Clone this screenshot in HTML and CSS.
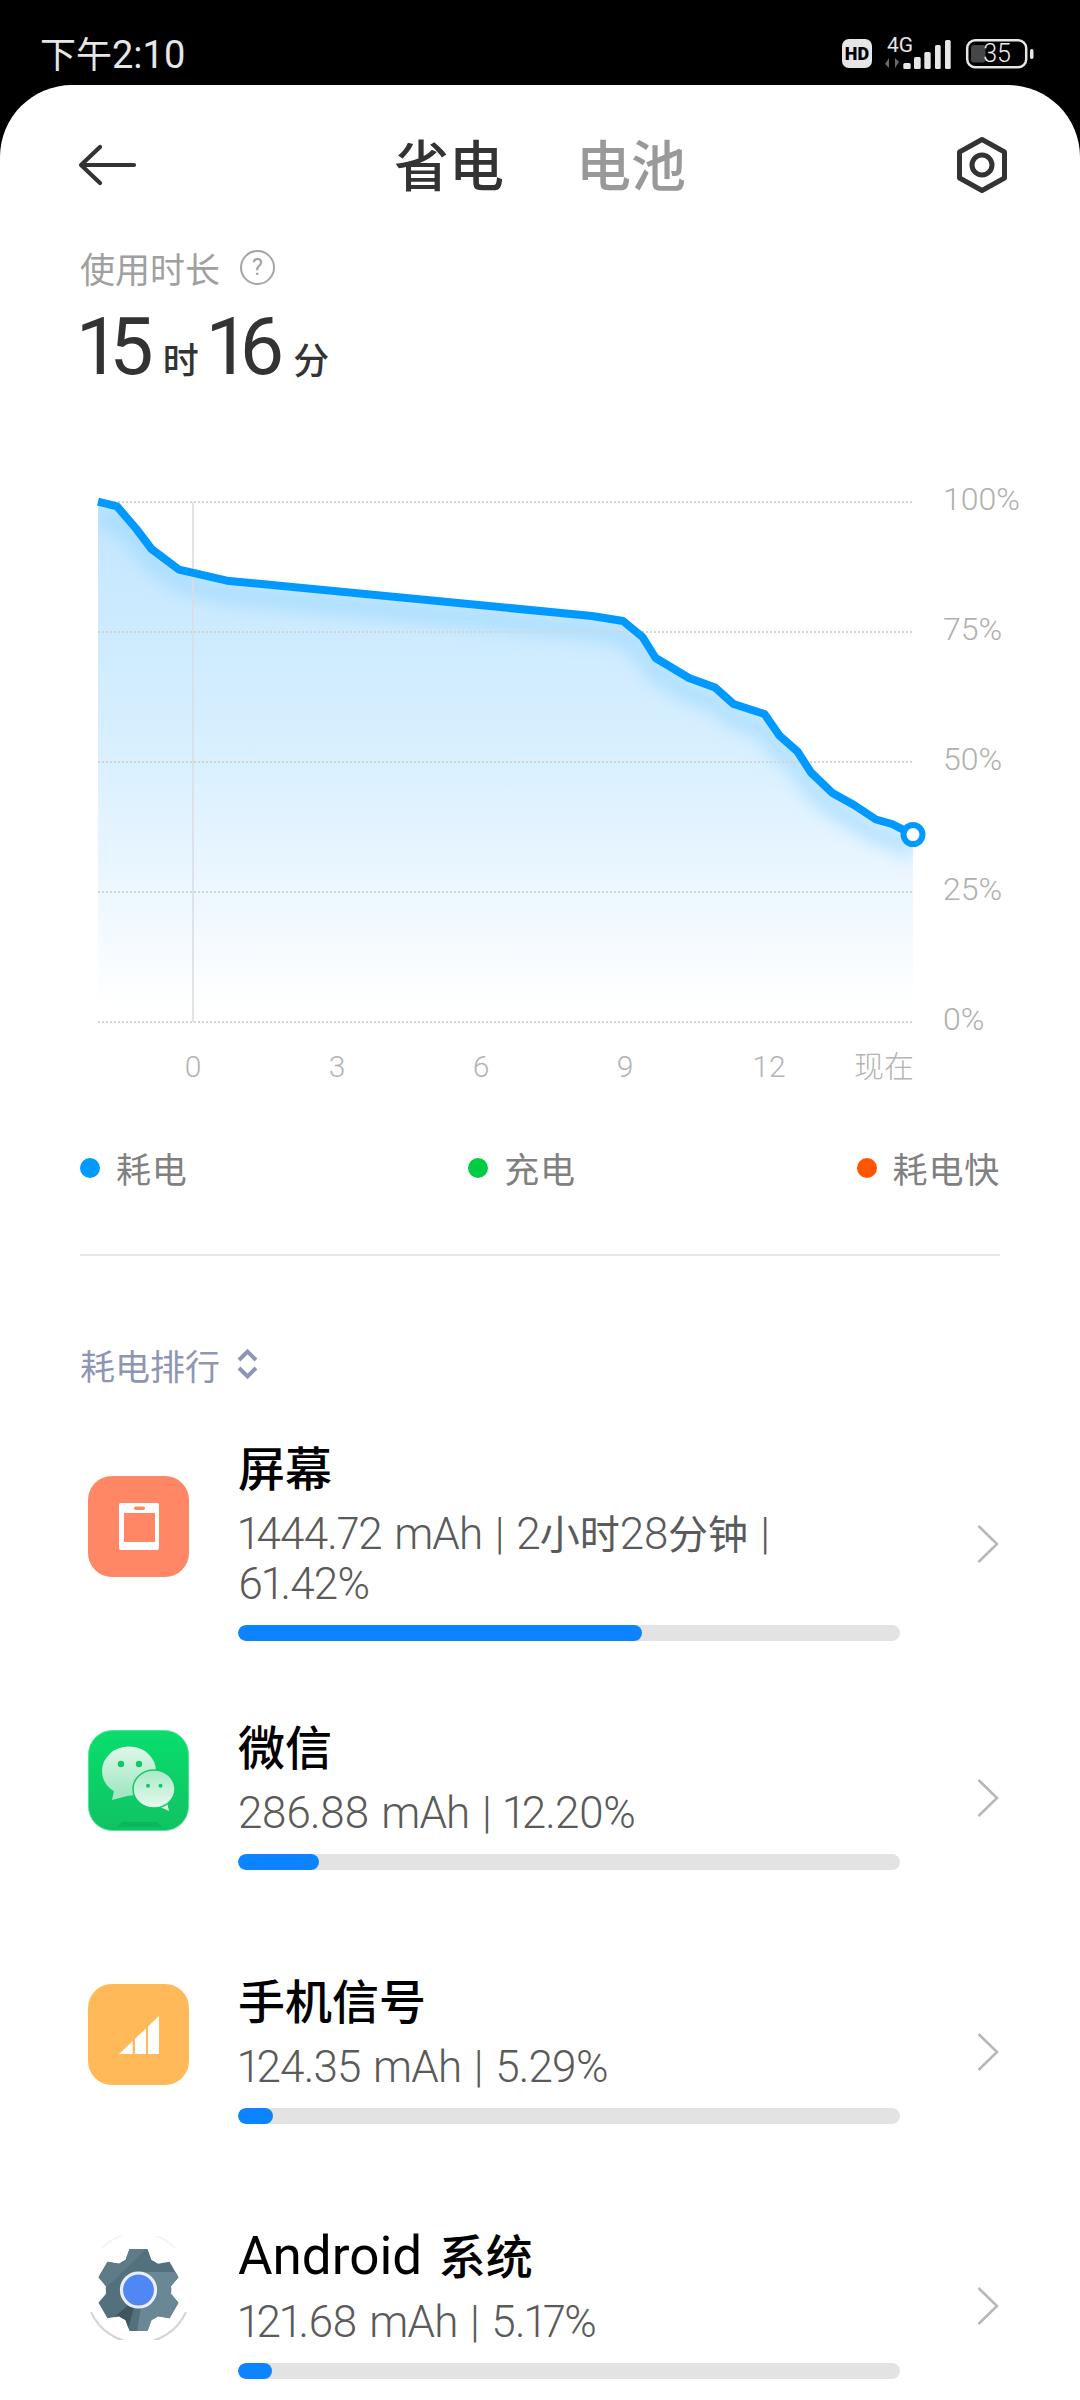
FILE: index.html
```html
<!DOCTYPE html>
<html lang="zh-CN">
<head>
<meta charset="utf-8">
<title>省电</title>
<link rel="stylesheet" href="styles.css">
</head>
<body>
<div class="phone">
  <div class="status">
    <span class="clock"><span class="clock-cjk">下午</span>2:10</span>
    <svg class="status-icons" width="200" height="40" viewBox="840 34 200 40">
      <rect x="842" y="39" width="30" height="29" rx="7" fill="#e6e6e6"/>
      <text x="857" y="59.5" class="st-hd">HD</text>
      <text x="900" y="52" class="st-4g">4G</text>
      <path d="M889 58v10l-4-4zM895 68v-10l4 4z" fill="#6a6a6a"/>
      <rect x="903.300" y="63" width="7.400" height="6" rx="1.500" fill="#e6e6e6"/>
      <rect x="914" y="57" width="6.700" height="12" rx="1.500" fill="#e6e6e6"/>
      <rect x="924.300" y="52" width="6.400" height="17" rx="1.500" fill="#e6e6e6"/>
      <rect x="935" y="45" width="5.700" height="24" rx="1.500" fill="#e6e6e6"/>
      <rect x="945" y="40" width="5.700" height="29" rx="1.500" fill="#e6e6e6"/>
      <rect x="967.200" y="40.200" width="59" height="27" rx="8" fill="none" stroke="#e6e6e6" stroke-width="2.500"/>
      <rect x="971" y="45" width="14.500" height="17.500" rx="3" fill="#464646"/>
      <text x="997" y="62" class="st-batt">35</text>
      <rect x="1030" y="49" width="3.500" height="10" rx="1.700" fill="#e6e6e6"/>
    </svg>
  </div>

  <main class="sheet">
    <header class="topbar">
      <svg class="back" width="60" height="44" viewBox="0 0 60 44">
        <path d="M56 22H3M22 4L3 22L22 40" fill="none" stroke="#333" stroke-width="4.200" stroke-linecap="round" stroke-linejoin="round"/>
      </svg>
      <nav class="tabs">
        <span class="tab tab-on">省电</span>
        <span class="tab">电池</span>
      </nav>
      <svg class="gear" width="56" height="60" viewBox="0 0 56 60">
        <path d="M28 4.500L50.500 17V43L28 55.500L5.500 43V17Z" fill="none" stroke="#333" stroke-width="5" stroke-linejoin="round"/>
        <circle cx="28" cy="30" r="10" fill="none" stroke="#333" stroke-width="5"/>
      </svg>
    </header>

    <div class="usage-label">
      <span>使用时长</span>
      <span class="help">?</span>
    </div>
    <div class="usage">
      <span class="num">15</span><span class="unit">时</span><span class="num num-2">16</span><span class="unit unit-2">分</span>
    </div>

    <svg class="chart" width="1080" height="610" viewBox="0 480 1080 610">
      <defs>
        <linearGradient id="area" x1="0" y1="502" x2="0" y2="1022" gradientUnits="userSpaceOnUse">
          <stop offset="0" stop-color="#c2e6fe"/>
          <stop offset="0.5" stop-color="#d9f0ff"/>
          <stop offset="0.75" stop-color="#edf7ff"/>
          <stop offset="0.97" stop-color="#ffffff"/>
        </linearGradient>
        <clipPath id="under">
          <path d="M98 501.600L117 506.400L136 528.500L151.500 549L179 569.600L227 580.700L592 616L623 621L642.500 637L655.600 658L689 678L715 687.500L733.500 704L764.500 714L779.600 735.700L797.500 751.500L811 772.500L832 792.700L854 805L876 819.500L892 824L913 834.600V1022H98Z"/>
        </clipPath>
        <filter id="soft" x="-10%" y="-10%" width="120%" height="120%">
          <feGaussianBlur stdDeviation="9"/>
        </filter>
      </defs>
      <path d="M98 501.600L117 506.400L136 528.500L151.500 549L179 569.600L227 580.700L592 616L623 621L642.500 637L655.600 658L689 678L715 687.500L733.500 704L764.500 714L779.600 735.700L797.500 751.500L811 772.500L832 792.700L854 805L876 819.500L892 824L913 834.600V1022H98Z" fill="url(#area)"/>
      <g clip-path="url(#under)">
        <path d="M98 520L117 520L136 540L151.500 560L179 582L227 594L592 630L623 636L642.500 652L655.600 673L689 693L715 702L733.500 718L764.500 729L779.600 750L797.500 766L811 787L832 807L854 820L876 834L892 839L913 850" fill="none" stroke="#96d6fd" stroke-width="16" stroke-opacity="0.7" filter="url(#soft)"/>
      </g>
      <g class="grid">
        <path d="M98 502H913"/>
        <path d="M98 632H913"/>
        <path d="M98 762H913"/>
        <path d="M98 892H913"/>
        <path d="M98 1022H913"/>
      </g>
      <path d="M193 502V1022" stroke="#d9dde0" stroke-width="1.500" fill="none"/>
      <path d="M98 501.600L117 506.400L136 528.500L151.500 549L179 569.600L227 580.700L592 616L623 621L642.500 637L655.600 658L689 678L715 687.500L733.500 704L764.500 714L779.600 735.700L797.500 751.500L811 772.500L832 792.700L854 805L876 819.500L892 824L913 834.600" fill="none" stroke="#0099ff" stroke-width="8" stroke-linejoin="round"/>
      <circle cx="913" cy="834.600" r="9.500" fill="#fff" stroke="#0099ff" stroke-width="6"/>
      <g class="axis-y">
        <text x="943" y="509.500">100%</text>
        <text x="943" y="639.500">75%</text>
        <text x="943" y="769.500">50%</text>
        <text x="943" y="899.500">25%</text>
        <text x="943" y="1029.500">0%</text>
      </g>
      <g class="axis-x">
        <text x="193" y="1077">0</text>
        <text x="337" y="1077">3</text>
        <text x="481" y="1077">6</text>
        <text x="625" y="1077">9</text>
        <text x="769" y="1077">12</text>
        <text x="884" y="1077" class="axis-now">现在</text>
      </g>
    </svg>

    <div class="legend">
      <div class="legend-item"><i class="dot dot-blue"></i><span>耗电</span></div>
      <div class="legend-item"><i class="dot dot-green"></i><span>充电</span></div>
      <div class="legend-item"><i class="dot dot-orange"></i><span>耗电快</span></div>
    </div>
    <div class="divider"></div>

    <div class="rank-head">
      <span>耗电排行</span>
      <svg width="24" height="32" viewBox="0 0 24 32">
        <path d="M3 12L11.500 3.500L20 12M3 20L11.500 28.500L20 20" fill="none" stroke="#8f96b3" stroke-width="4"/>
      </svg>
    </div>

    <section class="rows">
      <article class="row">
        <svg class="app-icon" width="101" height="101" viewBox="0 0 101 101">
          <rect width="101" height="101" rx="24" fill="#ff8766"/>
          <rect x="31" y="27" width="40" height="47" rx="2" fill="#fff"/>
          <rect x="36" y="37" width="31" height="29" fill="#ff8766"/>
          <rect x="46" y="30.500" width="11" height="3.500" rx="1.750" fill="#ff8766"/>
        </svg>
        <div class="info">
          <div class="name"><span class="cjk-name">屏幕</span></div>
          <div class="sub">1444.72 mAh | 2<span class="cjk">小时</span>28<span class="cjk">分钟</span> |<br>61.42%</div>
          <div class="track"><div class="fill" style="width:61%"></div></div>
        </div>
        <svg class="chev" width="22" height="38" viewBox="0 0 22 38"><path d="M1.500 1L20 19L1.500 37" fill="none" stroke="#b8b8b8" stroke-width="2.600"/></svg>
      </article>

      <article class="row">
        <svg class="app-icon" width="101" height="101" viewBox="0 0 101 101">
          <defs>
            <linearGradient id="wx" x1="0" y1="0" x2="0" y2="1"><stop offset="0" stop-color="#08de6c"/><stop offset="1" stop-color="#10c263"/></linearGradient>
            <linearGradient id="wxb" x1="0" y1="0" x2="0" y2="1"><stop offset="0" stop-color="#dff7ea"/><stop offset="1" stop-color="#a0e6c0"/></linearGradient>
            <linearGradient id="wxs" x1="0" y1="0" x2="0" y2="1"><stop offset="0" stop-color="#a8eac6"/><stop offset="1" stop-color="#e6f9ee"/></linearGradient>
          </defs>
          <rect x="0.500" y="0.500" width="100" height="100" rx="24" fill="url(#wx)" stroke="#52e596"/>
          <path d="M29 97L34 92H69L74 97Z" fill="#0bb55c"/>
          <path d="M24 70L27 56L43 65Z" fill="#a6e8c4"/>
          <ellipse cx="41" cy="41" rx="27" ry="24.500" fill="url(#wxb)"/>
          <circle cx="33" cy="34" r="3.200" fill="#10c868"/>
          <circle cx="51" cy="34" r="3.200" fill="#10c868"/>
          <path d="M81 81L70 76L78 68Z" fill="#e3f8ec"/>
          <ellipse cx="66" cy="59" rx="21" ry="19" fill="url(#wxs)" stroke="#0ecb67" stroke-width="1.500"/>
          <circle cx="60" cy="55.700" r="2" fill="#10c868"/>
          <circle cx="72.500" cy="55.700" r="2" fill="#10c868"/>
        </svg>
        <div class="info">
          <div class="name"><span class="cjk-name">微信</span></div>
          <div class="sub">286.88 mAh | 12.20%</div>
          <div class="track"><div class="fill" style="width:12.2%"></div></div>
        </div>
        <svg class="chev" width="22" height="38" viewBox="0 0 22 38"><path d="M1.500 1L20 19L1.500 37" fill="none" stroke="#b8b8b8" stroke-width="2.600"/></svg>
      </article>

      <article class="row">
        <svg class="app-icon" width="101" height="101" viewBox="0 0 101 101">
          <rect width="101" height="101" rx="24" fill="#ffb958"/>
          <path d="M31 70L44.700 57V70ZM47 54.800L58 44.400V70H47ZM60 42.500L71 32V70H60Z" fill="#fff"/>
        </svg>
        <div class="info">
          <div class="name"><span class="cjk-name">手机信号</span></div>
          <div class="sub">124.35 mAh | 5.29%</div>
          <div class="track"><div class="fill" style="width:5.29%"></div></div>
        </div>
        <svg class="chev" width="22" height="38" viewBox="0 0 22 38"><path d="M1.500 1L20 19L1.500 37" fill="none" stroke="#b8b8b8" stroke-width="2.600"/></svg>
      </article>

      <article class="row">
        <svg class="app-icon" width="101" height="104" viewBox="0 0 101 104">
          <defs>
            <clipPath id="gearclip">
              <path d="M-9-41H9L13-30A32.700 32.700 0 0 1 19.480-26.260L31-28.290L40-12.710L32.480-3.740A32.700 32.700 0 0 1 32.480 3.740L40 12.710L31 28.290L19.480 26.260A32.700 32.700 0 0 1 13 30L9 41H-9L-13 30A32.700 32.700 0 0 1-19.480 26.260L-31 28.290L-40 12.710L-32.480 3.740A32.700 32.700 0 0 1-32.480-3.740L-40-12.710L-31-28.290L-19.480-26.260A32.700 32.700 0 0 1-13-30Z"/>
            </clipPath>
          </defs>
          <path d="M3 76A52 52 0 0 0 98 76" fill="none" stroke="#d4d4d4" stroke-width="2"/>
          <path d="M14 12A52 52 0 0 1 87 12" fill="none" stroke="#f2f2f2" stroke-width="1.500"/>
          <g transform="translate(50.500 54)">
            <path d="M-9-41H9L13-30A32.700 32.700 0 0 1 19.480-26.260L31-28.290L40-12.710L32.480-3.740A32.700 32.700 0 0 1 32.480 3.740L40 12.710L31 28.290L19.480 26.260A32.700 32.700 0 0 1 13 30L9 41H-9L-13 30A32.700 32.700 0 0 1-19.480 26.260L-31 28.290L-40 12.710L-32.480 3.740A32.700 32.700 0 0 1-32.480-3.740L-40-12.710L-31-28.290L-19.480-26.260A32.700 32.700 0 0 1-13-30Z" fill="#53707d"/>
            <g clip-path="url(#gearclip)">
              <path d="M-45-45H12L-45 10Z" fill="#5f7b88"/>
              <path d="M-2 45L8-18H45V45Z" fill="#6a8795"/>
              <path d="M-12 45L-2 8L-45 45Z" fill="#3f5661"/>
            </g>
            <circle r="17" fill="#4f87f5" stroke="#e9eefb" stroke-width="3.200"/>
          </g>
        </svg>
        <div class="info">
          <div class="name name-android"><span class="latin">Android</span> <span class="cjk-name">系统</span></div>
          <div class="sub">121.68 mAh | 5.17%</div>
          <div class="track"><div class="fill" style="width:5.17%"></div></div>
        </div>
        <svg class="chev" width="22" height="38" viewBox="0 0 22 38"><path d="M1.500 1L20 19L1.500 37" fill="none" stroke="#b8b8b8" stroke-width="2.600"/></svg>
      </article>
    </section>
  </main>
</div>
</body>
</html>
```

FILE: styles.css
```css
* { box-sizing: border-box; }
html, body { margin: 0; padding: 0; background: #000; }
body { font-family: Roboto, "Noto Sans CJK SC", sans-serif; }

.phone { width: 1080px; height: 2400px; overflow: hidden; background: #000; }

.status { height: 85px; display: flex; align-items: flex-start; justify-content: space-between; color: #e6e6e6; }
.clock { margin: 33px 0 0 40px; font-size: 38px; line-height: 44px; font-weight: 400; }
.clock-cjk { font-size: 36px; }
.status-icons { display: block; margin-right: 40px; margin-top: 34px; }
.status-icons text { font-family: Roboto, sans-serif; fill: #e6e6e6; text-anchor: middle; }
.status-icons .st-hd { fill: #000; font-size: 18px; font-weight: 900; }
.status-icons .st-4g { font-size: 21px; font-weight: 400; }
.status-icons .st-batt { font-size: 25px; font-weight: 300; fill: #f0f0f0; }

.sheet { height: 2315px; background: #fff; border-radius: 72px 72px 0 0; padding-top: 40px; overflow: hidden; }

.topbar { height: 80px; display: flex; align-items: center; padding: 0 70px 0 78px; }
.back { display: block; }
.tabs { display: flex; gap: 72px; margin-left: 256px; }
.tab { font-size: 55px; line-height: 80px; padding-top: 4px; color: #999; font-weight: 500; }
.tab-on { color: #333; }
.gear { display: block; margin-left: auto; }

.usage-label { margin: 37px 0 0 80px; height: 50px; display: flex; align-items: center; gap: 20px; font-size: 35px; color: #a0a0a0; }
.help { width: 35px; height: 35px; border: 2.5px solid #a5a5a5; border-radius: 50%; display: flex; align-items: center; justify-content: center; font-size: 23px; line-height: 1; color: #a0a0a0; }

.usage { height: 102px; padding: 9px 0 0 79px; display: flex; align-items: baseline; color: #333; }
.num { font-size: 79px; line-height: 92px; font-weight: 400; letter-spacing: -4px; font-variant-numeric: proportional-nums; }
.num-2 { margin-left: 10px; }
.unit { font-size: 36px; font-weight: 500; margin-left: 13px; }
.unit-2 { margin-left: 13px; }

.chart { display: block; margin-top: 86px; }
.grid path { stroke: #d4d4d4; stroke-width: 2; stroke-dasharray: 2 2; fill: none; }
.axis-y text, .axis-x text { font-family: Roboto, "Noto Sans CJK SC", sans-serif; font-weight: 300; font-size: 32px; fill: #b0b0b0; }
.axis-x text { text-anchor: middle; font-size: 30px; fill: #b4b4b4; }
.axis-x .axis-now { font-size: 30px; }

.legend { margin: 52px 80px 0; height: 50px; display: flex; justify-content: space-between; font-size: 35px; letter-spacing: 0.8px; color: #808080; }
.legend-item { display: flex; align-items: center; gap: 16px; }
.dot { width: 20px; height: 20px; border-radius: 50%; display: block; margin-top: 2px; }
.dot-blue { background: #0099ff; }
.dot-green { background: #00cc44; }
.dot-orange { background: #ff5500; }

.divider { margin: 62px 80px 0; height: 2px; background: #e5e5e5; }

.rank-head { margin: 83px 0 0 80px; height: 50px; display: flex; align-items: center; gap: 16px; font-size: 35px; color: #8f96b3; }
.rank-head svg { display: block; }

.rows { margin-top: 10px; }
.row { height: 254px; display: flex; align-items: center; padding-left: 88px; }
.app-icon { display: block; flex: none; }
.info { width: 662px; margin-left: 49px; padding-top: 28px; flex: none; }
.name { font-size: 47px; line-height: 60px; color: #000; font-weight: 500; white-space: nowrap; word-spacing: 5px; }
.name-android { font-weight: 400; }
.latin { font-size: 53px; }
.cjk-name { font-weight: 500; }
.sub { margin-top: 10px; font-size: 44px; line-height: 48px; font-weight: 300; color: #5a5a5a; letter-spacing: -0.8px; word-spacing: 2.5px; font-variant-numeric: proportional-nums; white-space: nowrap; }
.cjk { font-size: 40px; font-weight: 400; letter-spacing: 0; }
.track { margin-top: 17px; height: 16px; border-radius: 8px; background: #e3e3e3; overflow: hidden; }
.fill { height: 16px; border-radius: 8px; background: #0d84ff; }
.chev { display: block; flex: none; margin: 35px 0 0 77px; }
```
